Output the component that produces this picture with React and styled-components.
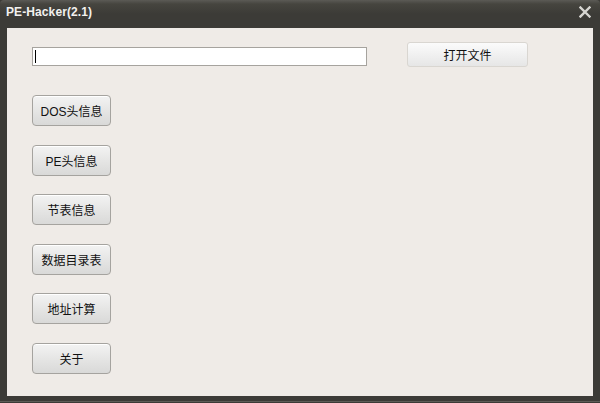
import React, { useState } from 'react';
import styled, { createGlobalStyle } from 'styled-components';

const GlobalStyle = createGlobalStyle`
  html, body {
    margin: 0;
    padding: 0;
    background: #3c3b37;
  }
  * {
    box-sizing: border-box;
  }
`;

const Window = styled.div`
  width: 600px;
  height: 403px;
  display: flex;
  flex-direction: column;
  background: #3c3b37;
  border-radius: 4px 4px 0 0;
  overflow: hidden;
  font-family: "Liberation Sans", "Noto Sans CJK SC", sans-serif;
`;

const TitleBar = styled.div`
  height: 28px;
  flex: none;
  display: flex;
  align-items: center;
  justify-content: space-between;
  padding: 0 8px 4px 6px;
  background: linear-gradient(#5b5a55 0px, #46453f 4px, #3c3b37 14px, #3c3b37 100%);
`;

const Title = styled.span`
  color: #f2f1ef;
  font-size: 12px;
  font-weight: bold;
  letter-spacing: 0.1px;
`;

const CloseButton = styled.button`
  width: 14px;
  height: 14px;
  padding: 0;
  border: none;
  background: transparent;
  display: flex;
  align-items: center;
  justify-content: center;
  cursor: pointer;
`;

const Client = styled.div`
  flex: 1;
  margin: 0 7px;
  background: #efebe7;
  padding: 14px 25px 0;
  display: flex;
  flex-direction: column;
`;

const BottomFrame = styled.div`
  height: 7px;
  flex: none;
  background: linear-gradient(#3c3b37 0, #3c3b37 5px, #5d5c57 5px, #5d5c57 6px, #3c3b37 6px);
`;

const FileRow = styled.div`
  display: flex;
  align-items: flex-start;
  height: 24px;
  margin-bottom: 29px;
`;

const InputWrap = styled.div`
  position: relative;
  margin-top: 5px;
`;

const PathInput = styled.input`
  display: block;
  width: 335px;
  height: 19px;
  border: 1px solid #a6a39e;
  background: #fff;
  padding: 0 3px;
  font-size: 12px;
  outline: none;
  caret-color: transparent;
`;

const Caret = styled.span`
  position: absolute;
  left: 3px;
  top: 3px;
  width: 1px;
  height: 13px;
  background: #000;
  pointer-events: none;
`;

const OpenButton = styled.button`
  margin-left: 40px;
  width: 121px;
  height: 25px;
  border: 1px solid #d9d6d1;
  border-radius: 3px;
  background: linear-gradient(#fbfbfb, #e6e6e6);
  font-family: "Noto Sans CJK SC", sans-serif;
  font-size: 12px;
  color: #111;
  cursor: pointer;
`;

const Menu = styled.div`
  display: flex;
  flex-direction: column;
  gap: 18.6px;
`;

const MenuButton = styled.button`
  width: 79px;
  height: 31px;
  border: 1px solid #a5a39f;
  border-radius: 4px;
  background: linear-gradient(#f3f3f3, #e3e3e2 60%, #d9d9d8);
  box-shadow: inset 0 1px 0 #fff;
  font-family: "Liberation Sans", "Noto Sans CJK SC", sans-serif;
  font-size: 12px;
  color: #111;
  padding: 0;
  cursor: pointer;
`;

const items = ['DOS头信息', 'PE头信息', '节表信息', '数据目录表', '地址计算', '关于'];

export default function App() {
  const [path, setPath] = useState('');

  return (
    <Window>
      <GlobalStyle />
      <TitleBar>
        <Title>PE-Hacker(2.1)</Title>
        <CloseButton aria-label="close">
          <svg width="12" height="12" viewBox="0 0 12 12">
            <path d="M1.5 1.5 L10.5 10.5 M10.5 1.5 L1.5 10.5" stroke="#d6d5d1" strokeWidth="2.4" strokeLinecap="square" />
          </svg>
        </CloseButton>
      </TitleBar>
      <Client>
        <FileRow>
          <InputWrap>
            <PathInput value={path} onChange={(e) => setPath(e.target.value)} />
            {!path && <Caret />}
          </InputWrap>
          <OpenButton>打开文件</OpenButton>
        </FileRow>
        <Menu>
          {items.map((label) => (
            <MenuButton key={label}>{label}</MenuButton>
          ))}
        </Menu>
      </Client>
      <BottomFrame />
    </Window>
  );
}
